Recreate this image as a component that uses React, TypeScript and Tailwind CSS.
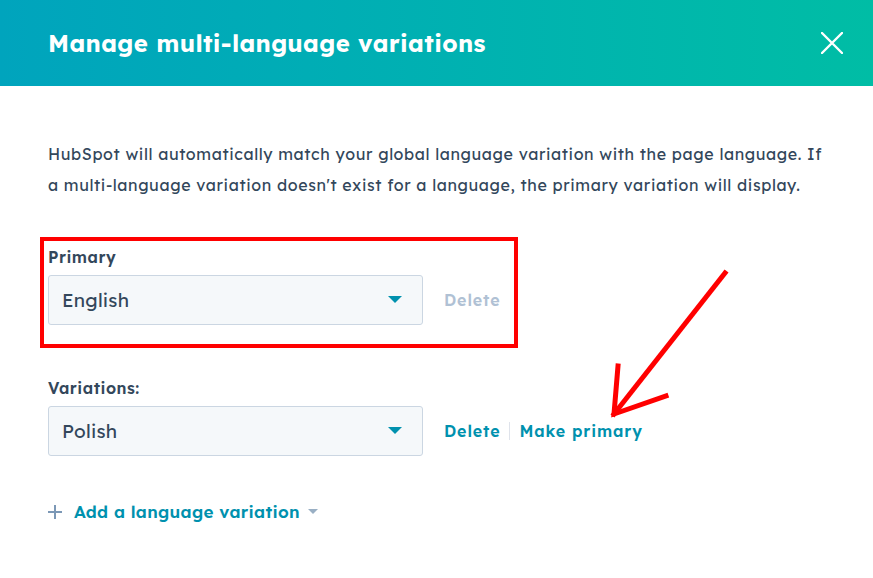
import React from "react";

const font = { fontFamily: "Lexend Deca, Inter, 'Noto Sans', sans-serif" };

function Caret({ className }: { className?: string }) {
  return (
    <svg width="14" height="8" viewBox="0 0 14 8" className={className}>
      <path d="M0 0 H14 L7 7 Z" fill="currentColor" />
    </svg>
  );
}

function LanguageSelect({ value }: { value: string }) {
  return (
    <div className="flex h-[50px] w-[375px] items-center justify-between rounded-[3px] border border-[#cbd6e2] bg-[#f5f8fa] pl-[13px] pr-[20px]">
      <span className="text-[19px] tracking-[0.2px] text-[#33475b]">{value}</span>
      <Caret className="text-[#0091ae]" />
    </div>
  );
}

export default function App() {
  return (
    <div className="relative h-[578px] w-[873px] overflow-hidden bg-white" style={font}>
      <header className="flex h-[86px] items-center justify-between bg-gradient-to-r from-[#00a4bd] to-[#00bda5] pl-[48px] pr-[30px]">
        <h1 className="text-[24px] font-bold tracking-[0.35px] text-white">Manage multi-language variations</h1>
        <svg width="22" height="22" viewBox="0 0 22 22" className="text-white">
          <path d="M1 1 L21 21 M21 1 L1 21" stroke="currentColor" strokeWidth="2.4" strokeLinecap="round" />
        </svg>
      </header>

      <main className="px-[48px] pt-[53px]">
        <p className="whitespace-nowrap text-[16px] leading-[31px] tracking-[0.62px] text-[#33475b]">
          HubSpot will automatically match your global language variation with the page language. If
          <br />
          a multi-language variation doesn't exist for a language, the primary variation will display.
        </p>

        <section className="mt-[44px]">
          <div className="text-[16px] font-semibold tracking-[0.5px] text-[#33475b]">Primary</div>
          <div className="mt-[6px] flex items-center gap-[21px]">
            <LanguageSelect value="English" />
            <span className="text-[16px] font-semibold tracking-[0.9px] text-[#b0c1d4]">Delete</span>
          </div>
        </section>

        <section className="mt-[51px]">
          <div className="text-[16px] font-semibold tracking-[0.5px] text-[#33475b]">Variations:</div>
          <div className="mt-[6px] flex items-center gap-[21px]">
            <LanguageSelect value="Polish" />
            <div className="flex items-center text-[16px] font-semibold tracking-[0.9px] text-[#0091ae]">
              <span>Delete</span>
              <span className="mx-[9px] h-[18px] w-px bg-[#dfe3eb]" />
              <span>Make primary</span>
            </div>
          </div>
        </section>

        <div className="mt-[43px] flex items-center">
          <svg width="14" height="14" viewBox="0 0 14 14" className="text-[#7c98b6]">
            <path d="M7 0 V14 M0 7 H14" stroke="currentColor" strokeWidth="2" />
          </svg>
          <span className="ml-[12px] text-[17px] font-semibold tracking-[0.3px] text-[#0091ae]">Add a language variation</span>
          <svg width="10" height="6" viewBox="0 0 10 6" className="ml-[8px] text-[#99afc4]">
            <path d="M0 0 H10 L5 5 Z" fill="currentColor" />
          </svg>
        </div>
      </main>

      {/* callout frame around the primary row */}
      <div className="pointer-events-none absolute left-[40px] top-[237px] h-[111px] w-[478px] border-[4px] border-[#ff0000]" />

      {/* pointer arrow */}
      <svg className="pointer-events-none absolute left-0 top-0" width="873" height="578">
        <g stroke="#ff0000" strokeWidth="5" strokeLinecap="square" fill="none">
          <path d="M725 273 L614 414" />
          <path d="M618 366 L614 414 L666 396" />
        </g>
      </svg>
    </div>
  );
}
